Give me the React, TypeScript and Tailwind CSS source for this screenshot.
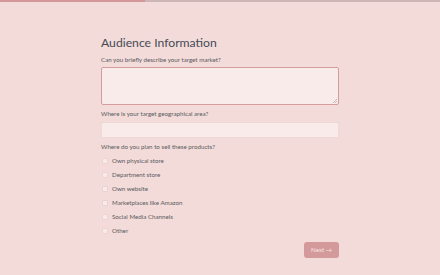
const options = [
  "Own physical store",
  "Department store",
  "Own website",
  "Marketplaces like Amazon",
  "Social Media Channels",
  "Other",
];

export default function App() {
  return (
    <div
      className="w-[440px] h-[275px] bg-[#f2dbd9] overflow-hidden"
      style={{ fontFamily: "Lato, 'Open Sans', sans-serif" }}
    >
      {/* progress */}
      <div className="flex h-[2px] w-full">
        <div className="w-[145px] bg-[#d4979a]" />
        <div className="flex-1 bg-[#cdb6b6]" />
      </div>

      <div className="mx-auto w-[238px] flex flex-col">
        <h1 className="mt-[33px] text-[12.2px] leading-4 text-[#474b56]">Audience Information</h1>

        <label className="mt-[5px] text-[6.2px] leading-[8px] text-[#5a5a60]">
          Can you briefly describe your target market?
        </label>
        <div className="mt-[2.5px] h-[38px] rounded-[2px] border border-[#d49c9d] bg-[#f9ebea] relative">
          <svg className="absolute right-[1px] bottom-[1px]" width="4" height="4" viewBox="0 0 4 4">
            <path d="M4 0 L0 4 M4 2 L2 4" stroke="#a99" strokeWidth="0.6" />
          </svg>
        </div>

        <label className="mt-[5px] text-[6.2px] leading-[8px] text-[#5a5a60]">
          Where is your target geographical area?
        </label>
        <div className="mt-[4px] h-[16px] rounded-[2px] border border-[#efd9d7] bg-[#f9ebea]" />

        <label className="mt-[5px] text-[6.2px] leading-[8px] text-[#5a5a60]">
          Where do you plan to sell these products?
        </label>
        <div className="mt-[3px] flex flex-col">
          {options.map((o) => (
            <div key={o} className="flex items-center h-[14px]">
              <div className="w-[6px] h-[6px] ml-[1px] rounded-[1px] bg-[#f8ebe9] border border-[#ebd2d0]" />
              <span className="ml-[4px] text-[6.2px] leading-[8px] text-[#5a5a60]">{o}</span>
            </div>
          ))}
        </div>

        <div className="mt-[4px] flex justify-end">
          <div className="w-[35px] h-[16px] rounded-[3px] bg-[#d49a9b] flex items-center justify-center text-[6.2px] text-[#f6e2e1]">
            Next →
          </div>
        </div>
      </div>
    </div>
  );
}
